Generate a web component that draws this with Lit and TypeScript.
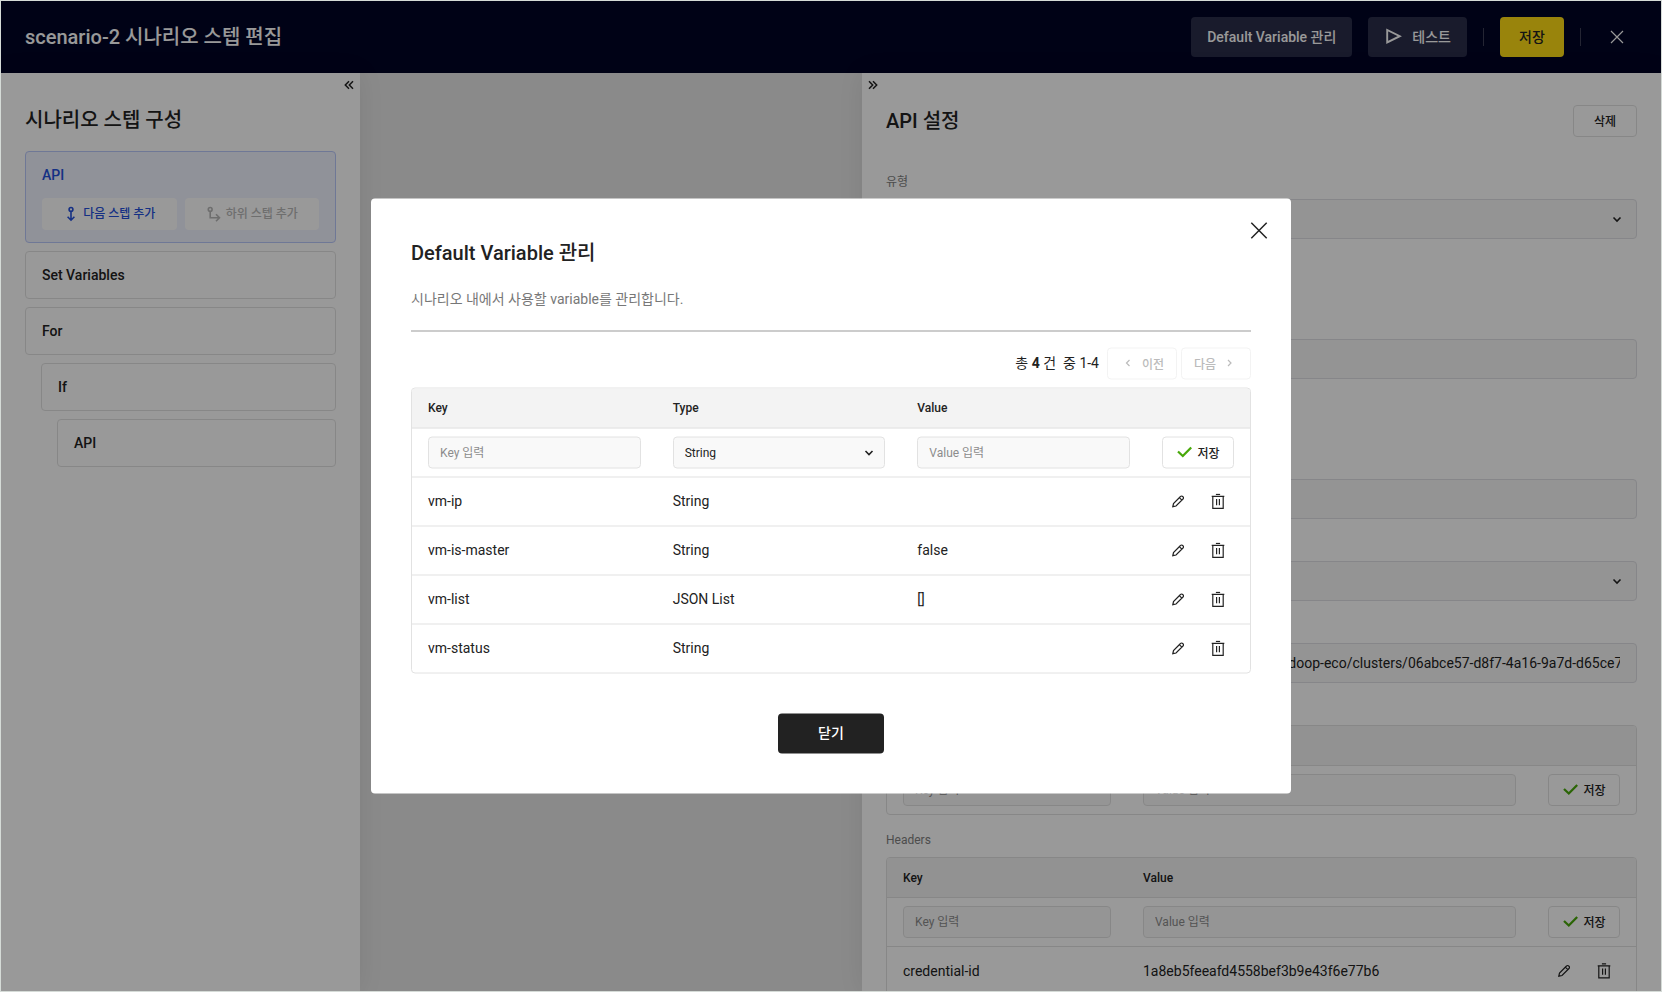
import { LitElement, html, css, svg, nothing } from "lit";
import { customElement, property } from "lit/decorators.js";
import { classMap } from "lit/directives/class-map.js";

const base = css`
  *, *::before, *::after { box-sizing: border-box; }
  h1, h2, p { margin: 0; }
  button, input, select { font: inherit; color: inherit; }
  button { cursor: pointer; }
  svg { display: block; flex: none; }
`;

/* Shared look of buttons, fields and tables. */
const controls = css`
  .btn {
    display: inline-flex; align-items: center; justify-content: center; gap: 5px;
    min-width: 64px; height: 32px; padding: 0 0 2px; white-space: nowrap;
    border: 1px solid #e2e2e2; border-radius: 4px; background: #fff;
    color: #222; font-size: 12px; font-weight: 500;
  }
  .btn.save { width: 72px; }
  .icon-btn {
    display: inline-flex; align-items: center; justify-content: center;
    width: 32px; height: 32px; padding: 0; border: 0; background: none; color: #222;
  }
  .input {
    display: block; width: 100%; height: 32px; padding: 0 11px; margin: 0;
    border: 1px solid #e2e2e2; border-radius: 4px; background: #f9f9f9;
    font-size: 12px; color: #222; appearance: none; outline: 0;
  }
  .input.large { height: 40px; padding: 0 16px; font-size: 14px; background: #f7f7f7; border-color: #dfdfe4; }
  .input::placeholder { color: #8c8c8c; opacity: 1; }
  .select { position: relative; }
  .select svg { position: absolute; right: 8px; top: 8px; pointer-events: none; }
  .select.large svg { right: 12px; top: 12px; }
  .box { border: 1px solid #e2e2e2; border-radius: 4px; overflow: hidden; background: #fff; }
  table { width: 100%; border-collapse: separate; border-spacing: 0; table-layout: fixed; }
  th {
    height: 40px; padding: 0 16px; text-align: left; font-size: 12px; font-weight: 500;
    background: #f3f3f3; border-bottom: 1px solid #e2e2e2;
  }
  td { height: 49px; padding: 0 16px; font-size: 14px; border-bottom: 1px solid #e2e2e2; }
  tr:last-child td { height: 48px; border-bottom: 0; }
  .col-key { width: 240px; }
  .col-actions { width: 104px; }
  .actions { display: flex; gap: 8px; }
`;

const icon = (size: number, body: unknown) =>
  html`<svg width=${size} height=${size} viewBox="0 0 ${size} ${size}" fill="none" stroke="currentColor" aria-hidden="true">${body}</svg>`;

const icons = {
  chevronDown: icon(16, svg`<path d="M4.500 6.500 8 10l3.500-3.500" stroke-width="1.600"/>`),
  chevronLeft: icon(16, svg`<path d="M9.500 5.500 6.500 8.500l3 3" stroke-width="1.200"/>`),
  chevronRight: icon(16, svg`<path d="M6 5.500l3 3-3 3" stroke-width="1.200"/>`),
  collapseLeft: icon(16, svg`<path d="M9 4.200 5.300 8 9 11.800M13 4.200 9.300 8l3.700 3.800" stroke-width="1.500"/>`),
  collapseRight: icon(16, svg`<path d="M3 4.200 6.700 8 3 11.800M7 4.200 10.700 8 7 11.800" stroke-width="1.500"/>`),
  check: icon(16, svg`<path d="M2 8 6.800 12.500 15.200 4" stroke="#49a90b" stroke-width="2.300"/>`),
  play: icon(20, svg`<path d="M3.200 4v12.400L15.800 10.200z" stroke-width="1.900"/>`),
  close: icon(16, svg`<path d="M2 2l12 12M14 2 2 14" stroke-width="1.200"/>`),
  closeLarge: icon(24, svg`<path d="M4.300 4.300l15.400 15.400M19.700 4.300 4.300 19.700" stroke-width="1.500"/>`),
  nextStep: icon(16, svg`<circle cx="8" cy="3.400" r="1.900" stroke-width="1.600"/><path d="M8 5.200v8.800M4.600 10.800 8 14.200l3.400-3.400" stroke-width="1.600"/>`),
  childStep: icon(16, svg`<circle cx="4.200" cy="3.400" r="1.900" stroke-width="1.600"/><path d="M4.200 5.200v6.500h9M10 8.200l3.500 3.500-3.500 3.500" stroke-width="1.600"/>`),
  pencil: icon(16, svg`<path d="M2.800 13.200l.7-3.200 7-7a1.500 1.500 0 0 1 2.200 0l.3.300a1.500 1.500 0 0 1 0 2.200l-7 7zM9.400 4.200l2.400 2.400" stroke-width="1.200"/>`),
  trash: icon(16, svg`<path d="M1.700 2.800h12.600M5.900.8h4.200M2.800 2.800v12h10.400V2.800M6.600 5.600v6.200M9.400 5.600v6.200" stroke-width="1.200"/>`),
};

const rowActions = (name: string) => html`
  <div class="actions">
    <button class="icon-btn" type="button" aria-label="${name} 수정">${icons.pencil}</button>
    <button class="icon-btn" type="button" aria-label="${name} 삭제">${icons.trash}</button>
  </div>`;

const saveButton = html`<button class="btn save" type="button">${icons.check}저장</button>`;

interface Step { label: string; depth: number; active?: boolean; }

@customElement("step-sidebar")
class StepSidebar extends LitElement {
  static styles = [base, css`
    :host { display: block; background: #fff; box-shadow: 0 0 24px rgba(0, 0, 0, .08); }
    .fold { display: flex; justify-content: flex-end; }
    .fold button { width: 24px; height: 24px; padding: 4px; border: 0; background: none; }
    .body { padding: 8px 24px 24px; }
    h2 { font-size: 20px; line-height: 30px; font-weight: 500; margin-bottom: 16px; }
    ul { list-style: none; margin: 0; padding: 0; display: grid; gap: 8px; }
    .step {
      border: 1px solid #e2e2e2; border-radius: 4px; padding: 12px 16px;
      font-size: 14px; line-height: 22px; font-weight: 500;
    }
    .step.depth-1 { margin-left: 16px; }
    .step.depth-2 { margin-left: 32px; }
    .step.active { background: #f1f3ff; border-color: #bac8fb; color: #2450dc; }
    .adders { display: grid; grid-template-columns: 1fr 1fr; gap: 8px; margin-top: 12px; }
    .adders button {
      display: flex; align-items: center; justify-content: center; gap: 4px; height: 32px;
      padding: 0; border: 0; border-radius: 4px; background: #fff; color: #2450dc;
      font-size: 12px; font-weight: 500;
    }
    .adders button:disabled { color: #b8b8b8; }
  `];

  steps: Step[] = [
    { label: "API", depth: 0, active: true },
    { label: "Set Variables", depth: 0 },
    { label: "For", depth: 0 },
    { label: "If", depth: 1 },
    { label: "API", depth: 2 },
  ];

  render() {
    return html`
      <div class="fold"><button type="button" aria-label="접기">${icons.collapseLeft}</button></div>
      <div class="body">
        <h2>시나리오 스텝 구성</h2>
        <ul>
          ${this.steps.map((s) => html`
            <li class=${classMap({ step: true, active: !!s.active, [`depth-${s.depth}`]: true })}>
              ${s.label}
              ${s.active ? html`
                <div class="adders">
                  <button type="button">${icons.nextStep}다음 스텝 추가</button>
                  <button type="button" disabled>${icons.childStep}하위 스텝 추가</button>
                </div>` : nothing}
            </li>`)}
        </ul>
      </div>`;
  }
}

@customElement("api-settings")
class ApiSettings extends LitElement {
  static styles = [base, controls, css`
    :host { display: block; min-height: 0; overflow: hidden; background: #fff; }
    .fold button { display: block; width: 24px; height: 24px; padding: 4px; border: 0; background: none; }
    .body { padding: 8px 24px 24px; }
    .title { display: flex; align-items: center; justify-content: space-between; margin-bottom: 36px; }
    h2 { font-size: 20px; line-height: 28px; font-weight: 500; }
    .field { margin-bottom: 16px; }
    .field.section-end { margin-bottom: 74px; }
    .label { display: block; margin-bottom: 8px; font-size: 12px; line-height: 18px; color: #808080; }
  `];

  private pairTable(id: string, rows: [string, string][]) {
    return html`
      <div class="box">
        <table aria-labelledby=${id}>
          <colgroup><col class="col-key"><col><col class="col-actions"></colgroup>
          <thead><tr><th>Key</th><th>Value</th><th></th></tr></thead>
          <tbody>
            <tr>
              <td><input class="input" placeholder="Key 입력" aria-label="Key"></td>
              <td><input class="input" placeholder="Value 입력" aria-label="Value"></td>
              <td>${saveButton}</td>
            </tr>
            ${rows.map(([k, v]) => html`<tr><td>${k}</td><td>${v}</td><td>${rowActions(k)}</td></tr>`)}
          </tbody>
        </table>
      </div>`;
  }

  render() {
    return html`
      <div class="fold"><button type="button" aria-label="펼치기">${icons.collapseRight}</button></div>
      <div class="body">
        <div class="title"><h2>API 설정</h2><button class="btn" type="button">삭제</button></div>
        <div class="field section-end">
          <label class="label" for="kind">유형</label>
          <div class="select large"><select class="input large" id="kind"><option>API</option></select>${icons.chevronDown}</div>
        </div>
        <div class="field section-end">
          <label class="label" for="name">이름</label>
          <input class="input large" id="name">
        </div>
        <div class="field">
          <label class="label" for="desc">설명</label>
          <input class="input large" id="desc">
        </div>
        <div class="field">
          <label class="label" for="method">Method</label>
          <div class="select large"><select class="input large" id="method"><option>GET</option></select>${icons.chevronDown}</div>
        </div>
        <div class="field">
          <label class="label" for="url">URL</label>
          <input class="input large" id="url" value="https://hadoop-eco.ap-central-2.kakaoi.io/api-gateways/v1/hadoop-eco/clusters/06abce57-d8f7-4a16-9a7d-d65ce7">
        </div>
        <div class="field">
          <span class="label" id="params">Parameters</span>
          ${this.pairTable("params", [])}
        </div>
        <div class="field">
          <span class="label" id="headers">Headers</span>
          ${this.pairTable("headers", [["credential-id", "1a8eb5feeafd4558bef3b9e43f6e77b6"]])}
        </div>
      </div>`;
  }
}

interface Variable { key: string; type: string; value: string; }

@customElement("variable-dialog")
class VariableDialog extends LitElement {
  static styles = [base, controls, css`
    :host {
      position: absolute; top: 50%; left: 50%; transform: translate(-50%, -50%);
      width: 920px; max-width: 100%; padding: 40px; background: #fff; border-radius: 4px;
    }
    .dismiss { position: absolute; top: 20px; right: 20px; width: 24px; height: 24px; padding: 0; border: 0; background: none; }
    h2 { font-size: 20px; line-height: 28px; font-weight: 500; margin-bottom: 20px; }
    .lead { padding-bottom: 20px; border-bottom: 1px solid #999; font-size: 14px; line-height: 24px; color: #777; }
    .paging { display: flex; align-items: center; justify-content: flex-end; gap: 4px; margin: 16px 0 8px; font-size: 14px; }
    .count { display: flex; gap: 7px; margin-right: 4px; padding-bottom: 4px; }
    .count strong { font-weight: 700; }
    .paging .btn { width: 70px; gap: 6px; }
    .paging .btn:disabled { color: #bbb; border-color: #f3f3f3; }
    th, .text { padding-bottom: 2px; }
    .foot { display: flex; justify-content: center; margin-top: 40px; }
    .confirm { width: 106px; height: 40px; padding: 0 0 4px; border: 0; border-radius: 4px; background: #222; color: #fff; font-size: 14px; font-weight: 500; }
  `];

  variables: Variable[] = [
    { key: "vm-ip", type: "String", value: "" },
    { key: "vm-is-master", type: "String", value: "false" },
    { key: "vm-list", type: "JSON List", value: "[]" },
    { key: "vm-status", type: "String", value: "" },
  ];

  render() {
    return html`
      <button class="dismiss" type="button" aria-label="닫기">${icons.closeLarge}</button>
      <h2>Default Variable 관리</h2>
      <p class="lead">시나리오 내에서 사용할 variable를 관리합니다.</p>
      <div class="paging">
        <div class="count"><span>총 <strong>${this.variables.length}</strong> 건</span><span>중 1-4</span></div>
        <button class="btn" type="button" disabled>${icons.chevronLeft}이전</button>
        <button class="btn" type="button" disabled>다음${icons.chevronRight}</button>
      </div>
      <div class="box">
        <table>
          <colgroup><col><col><col><col class="col-actions"></colgroup>
          <thead><tr><th>Key</th><th>Type</th><th>Value</th><th></th></tr></thead>
          <tbody>
            <tr>
              <td><input class="input" placeholder="Key 입력" aria-label="Key"></td>
              <td><div class="select"><select class="input" aria-label="Type"><option>String</option><option>JSON List</option></select>${icons.chevronDown}</div></td>
              <td><input class="input" placeholder="Value 입력" aria-label="Value"></td>
              <td>${saveButton}</td>
            </tr>
            ${this.variables.map((v) => html`
              <tr><td class="text">${v.key}</td><td class="text">${v.type}</td><td class="text">${v.value}</td><td>${rowActions(v.key)}</td></tr>`)}
          </tbody>
        </table>
      </div>
      <div class="foot"><button class="confirm" type="button">닫기</button></div>`;
  }
}

@customElement("app-root")
class AppRoot extends LitElement {
  static styles = [base, css`
    :host {
      display: flex; height: 100vh; box-sizing: border-box; border: 1px solid #d5dbd7;
      font-family: Roboto, "Noto Sans CJK KR", sans-serif; color: #222;
    }
    .app { position: relative; flex: 1; min-width: 0; display: flex; flex-direction: column; overflow: hidden; }
    header {
      display: flex; align-items: center; gap: 16px; height: 72px; padding: 0 24px;
      background: #000425; color: #fff;
    }
    h1 { flex: 1; font-size: 20px; line-height: 28px; font-weight: 500; }
    header button {
      display: flex; align-items: center; justify-content: center; gap: 8px; height: 40px;
      min-width: 64px; padding: 0 16px 2px; border: 0; border-radius: 4px; background: #2a2d4a;
      color: inherit; font-size: 14px; font-weight: 500; white-space: nowrap;
    }
    header .primary { background: #ffdd15; color: #222; }
    header .close { min-width: 40px; padding: 0; background: none; }
    .rule { width: 1px; height: 18px; background: #3c3f55; }
    main { flex: 1; min-height: 0; display: grid; grid-template-columns: 359px 1fr 799px; background: #e6e6e6; }
    .settings { min-height: 0; display: grid; box-shadow: 0 0 24px rgba(0, 0, 0, .08); }
    .veil { position: absolute; inset: 0; background: rgba(0, 0, 0, .4); }
  `];

  @property() scenario = "scenario-2";

  render() {
    return html`
      <div class="app">
        <header>
          <h1>${this.scenario} 시나리오 스텝 편집</h1>
          <button type="button">Default Variable 관리</button>
          <button type="button">${icons.play}테스트</button>
          <span class="rule"></span>
          <button class="primary" type="button">저장</button>
          <span class="rule"></span>
          <button class="close" type="button" aria-label="닫기">${icons.close}</button>
        </header>
        <main>
          <step-sidebar></step-sidebar>
          <div></div>
          <div class="settings"><api-settings></api-settings></div>
        </main>
        <div class="veil"><variable-dialog role="dialog" aria-modal="true" aria-label="Default Variable 관리"></variable-dialog></div>
      </div>`;
  }
}
